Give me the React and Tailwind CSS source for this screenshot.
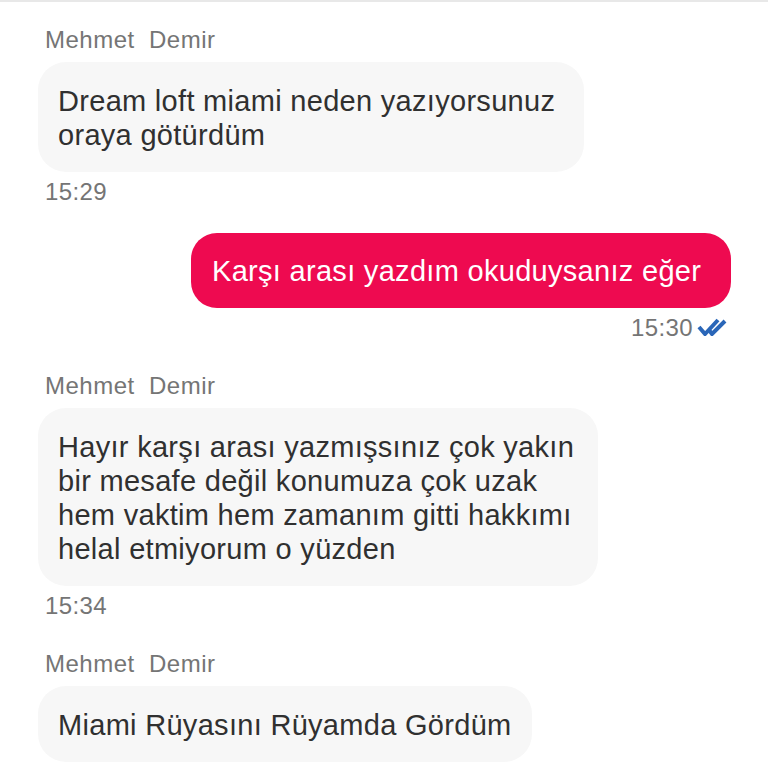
import React from 'react';

const Incoming = ({ name, lines, time, width }) => (
  <div className="flex flex-col items-start">
    <div className="text-[24px] leading-[28px] text-[#757575] pl-[45px] tracking-[0.5px] whitespace-pre">{name}</div>
    <div className={`mt-[8px] ml-[38px] ${width} bg-[#f7f7f7] rounded-[28px] pl-5 pt-[22px] pb-[20px] text-[29px] leading-[34px] tracking-[0.3px] text-[#303030] whitespace-pre`}>
      {lines.join('\n')}
    </div>
    {time && <div className="mt-[6px] pl-[45px] text-[24px] leading-[28px] tracking-[0.4px] text-[#757575]">{time}</div>}
  </div>
);

export default function App() {
  return (
    <div className="w-[768px] h-[768px] overflow-hidden bg-white border-t-2 border-[#e8e8e8] pt-[24px]" style={{ fontFamily: '"Liberation Sans", Arial, sans-serif' }}>
      <Incoming
        name="Mehmet  Demir"
        lines={['Dream loft miami neden yazıyorsunuz', 'oraya götürdüm']}
        time="15:29"
        width="w-[546px]"
      />

      <div className="flex flex-col items-end pr-[37px] mt-[27px]">
        <div className="bg-[#ee0a50] text-white rounded-[26px] w-[540px] h-[75px] flex items-center pl-[21px] pt-[2px] text-[29px] tracking-[0.3px] whitespace-pre">
          Karşı arası yazdım okuduysanız eğer
        </div>
        <div className="flex items-center mt-[6px] pr-[4px] text-[24px] leading-[28px] tracking-[0.4px] text-[#757575]">
          <span>15:30</span>
          <svg width="30" height="18" viewBox="0 0 30 18" fill="none" className="ml-[4px] -mt-[2px]">
            <path d="M2 9l6 7L21 2" stroke="#2a66b8" strokeWidth="4" />
            <path d="M12 12l3 4L28 3" stroke="#2a66b8" strokeWidth="4" />
          </svg>
        </div>
      </div>

      <div className="mt-[30px]">
        <Incoming
          name="Mehmet  Demir"
          lines={['Hayır karşı arası yazmışsınız çok yakın', 'bir mesafe değil konumuza çok uzak', 'hem vaktim hem zamanım gitti hakkımı', 'helal etmiyorum o yüzden']}
          time="15:34"
          width="w-[560px]"
        />
      </div>

      <div className="mt-[30px]">
        <Incoming name="Mehmet  Demir" lines={['Miami Rüyasını Rüyamda Gördüm']} width="w-[494px]" />
      </div>
    </div>
  );
}
